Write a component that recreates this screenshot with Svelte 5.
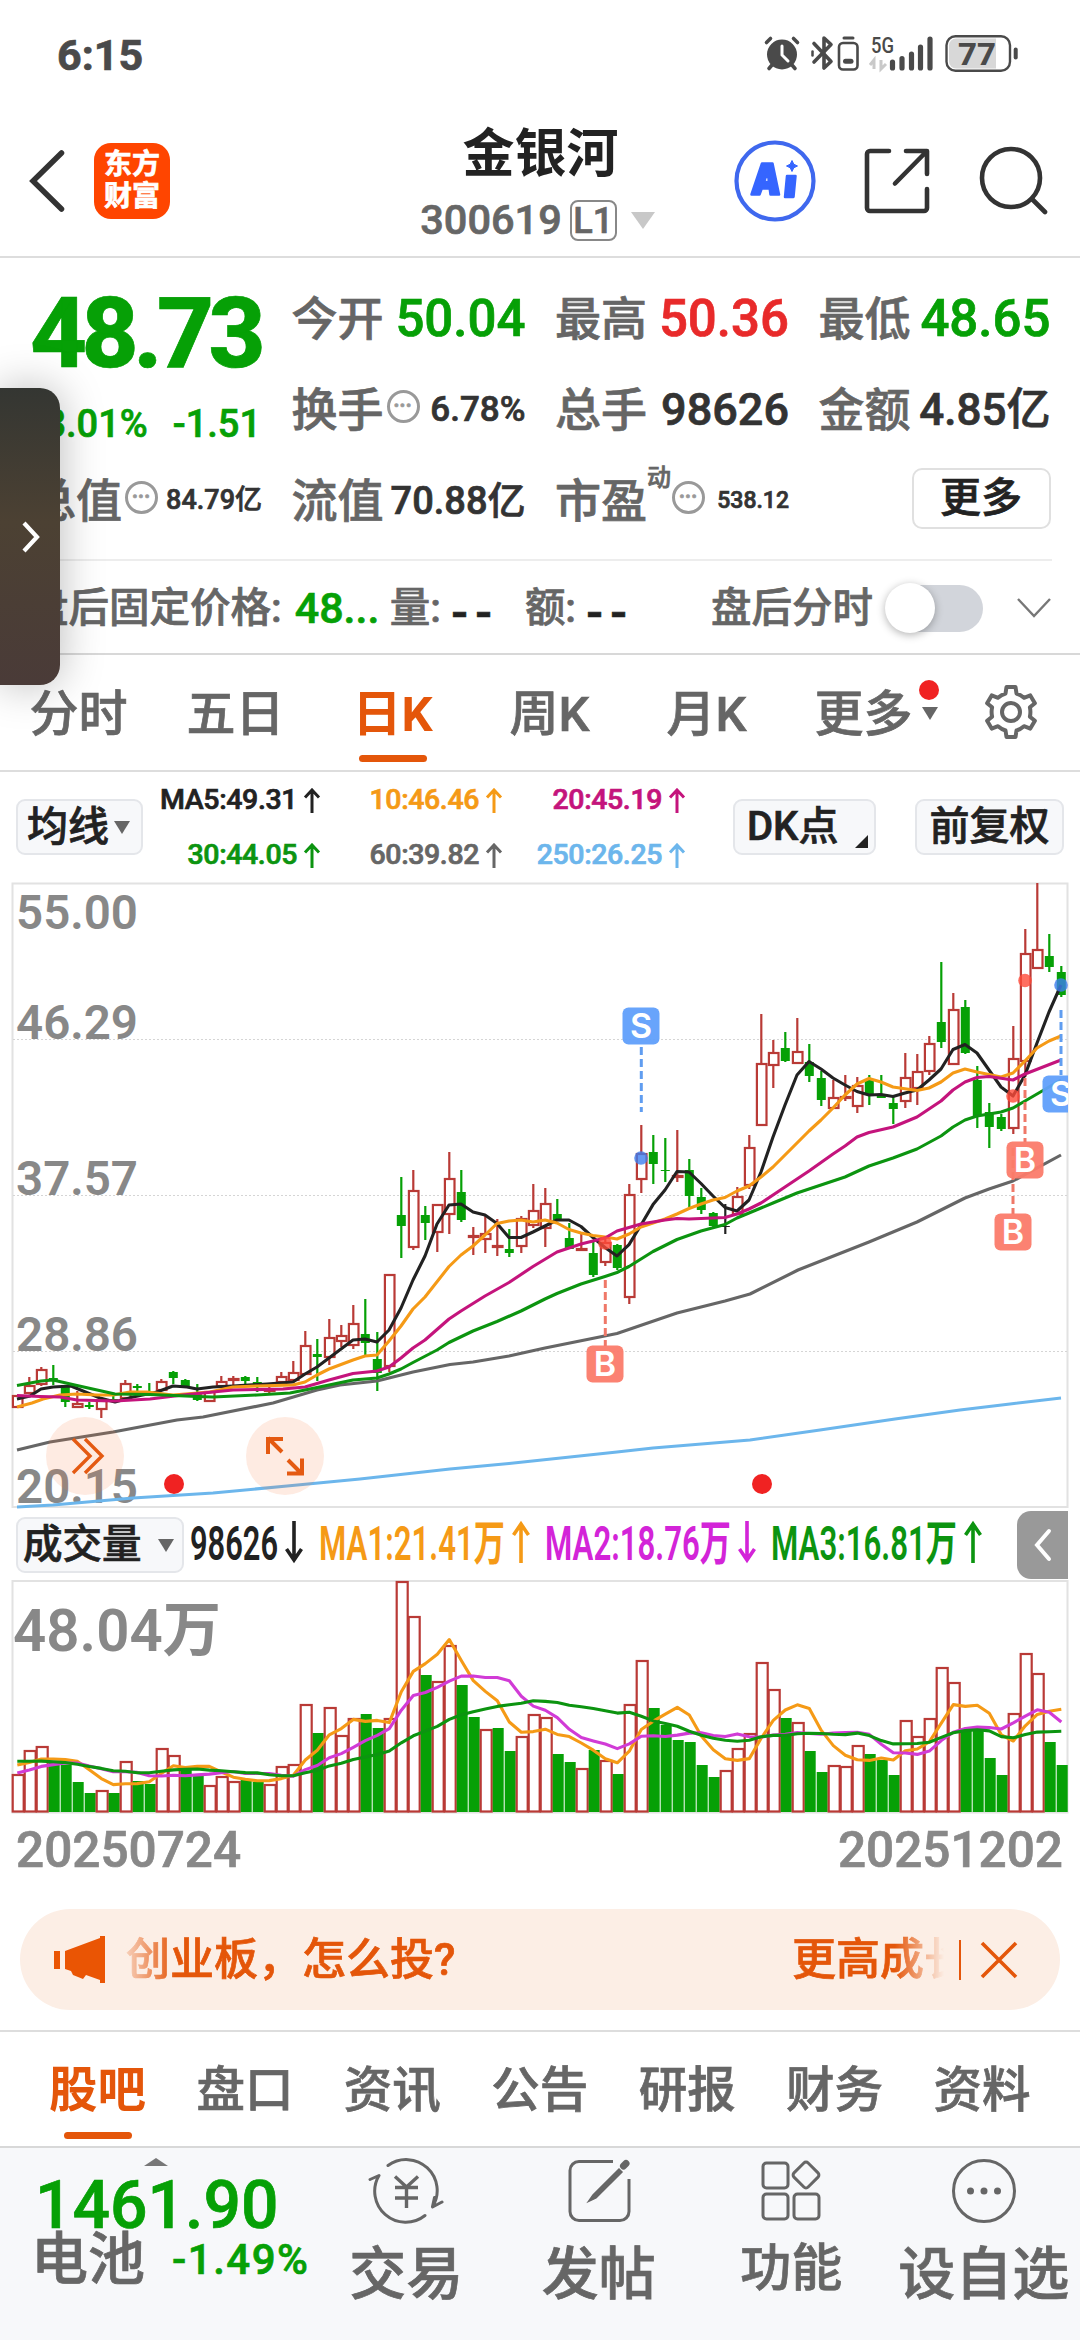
<script>
  const quotes = [
    { label: '今开', value: '50.04', tone: 'down', size: 51 },
    { label: '最高', value: '50.36', tone: 'up', size: 51 },
    { label: '最低', value: '48.65', tone: 'down', size: 51 },
    { label: '换手', value: '6.78%', size: 35, tip: true },
    { label: '总手', value: '98626', size: 45 },
    { label: '金额', value: '4.85亿', size: 44 },
    { label: '流值', value: '70.88亿', size: 38 },
    { label: '市盈', value: '538.12', size: 23, tip: true, sup: '动' },
  ];

  const periods = ['分时', '五日', '日K', '周K', '月K'];

  const averages = [
    { text: 'MA5:49.31', color: '#222222' },
    { text: '10:46.46', color: '#f59a16' },
    { text: '20:45.19', color: '#c4147c' },
    { text: '30:44.05', color: '#0c9410' },
    { text: '60:39.82', color: '#666666' },
    { text: '250:26.25', color: '#6cb6ec' },
  ];

  const sections = ['股吧', '盘口', '资讯', '公告', '研报', '财务', '资料'];

  // kind, high, body top, body bottom, low
  const candles = [
    ['r', 525, 525, 538, 538], ['r', 507, 515, 524, 524], ['r', 497, 499, 515, 516], ['g', 495, 508, 510, 515],
    ['g', 516, 517, 532, 537], ['r', 521, 533, 538, 538], ['g', 532, 535, 537, 539], ['r', 529, 530, 540, 548],
    ['g', 526, 529, 530, 532], ['r', 510, 513, 529, 530], ['g', 514, 516, 518, 522], ['g', 513, 522, 523, 525],
    ['r', 509, 511, 521, 521], ['g', 501, 502, 508, 514], ['g', 509, 510, 517, 517], ['g', 514, 522, 530, 531],
    ['r', 521, 521, 532, 532], ['r', 506, 511, 517, 518], ['r', 506, 508, 510, 515], ['g', 506, 507, 511, 515],
    ['g', 507, 512, 514, 522], ['r', 517, 519, 521, 523], ['r', 502, 506, 513, 515], ['r', 491, 502, 511, 512],
    ['r', 461, 475, 505, 505], ['g', 469, 484, 487, 511], ['r', 449, 467, 488, 495], ['r', 455, 465, 472, 477],
    ['r', 435, 453, 476, 479], ['g', 429, 464, 473, 485], ['g', 462, 489, 503, 521], ['r', 404, 404, 497, 502],
    ['g', 307, 345, 356, 388], ['r', 300, 320, 378, 380], ['g', 336, 345, 353, 370], ['r', 334, 334, 363, 382],
    ['r', 282, 308, 345, 364], ['g', 300, 322, 350, 352], ['r', 357, 365, 368, 385], ['r', 346, 363, 370, 383],
    ['r', 349, 375, 376, 386], ['g', 359, 379, 383, 387], ['r', 346, 348, 377, 383], ['r', 314, 340, 356, 358],
    ['r', 318, 333, 359, 377], ['g', 329, 344, 350, 351], ['g', 353, 368, 379, 379], ['r', 362, 378, 380, 380],
    ['g', 372, 383, 405, 407], ['r', 366, 372, 393, 396], ['g', 374, 375, 398, 400], ['r', 314, 324, 428, 434],
    ['r', 255, 283, 310, 323], ['g', 265, 282, 294, 314], ['g', 268, 300, 301, 312], ['r', 260, 305, 308, 312],
    ['g', 289, 300, 326, 337], ['g', 318, 327, 340, 344], ['g', 342, 343, 356, 358], ['k', 334, 356, 357, 364],
    ['r', 317, 326, 345, 345], ['r', 265, 277, 316, 319], ['r', 144, 193, 256, 256], ['r', 170, 182, 196, 218],
    ['g', 162, 178, 191, 192], ['r', 148, 181, 194, 194], ['g', 174, 192, 206, 212], ['g', 201, 208, 230, 236],
    ['r', 210, 227, 239, 239], ['r', 205, 226, 228, 231], ['r', 207, 215, 237, 243], ['g', 205, 209, 225, 235],
    ['g', 205, 225, 228, 228], ['g', 227, 233, 239, 254], ['r', 183, 207, 232, 238], ['r', 184, 201, 219, 235],
    ['r', 166, 173, 202, 205], ['g', 92, 152, 172, 178], ['r', 123, 139, 195, 195], ['g', 130, 137, 183, 184],
    ['g', 196, 210, 246, 258], ['g', 233, 242, 257, 278], ['g', 244, 247, 259, 261], ['r', 156, 188, 259, 264],
    ['r', 59, 83, 192, 207], ['r', 13, 79, 99, 99], ['g', 64, 86, 97, 102], ['g', 96, 102, 125, 127],
  ];

  const kLines = [
    { color: '#6cb6ec', points: '17,637 53,635 133,628 213,623 287,616 360,609 450,599 509,593.5 617,582 653,578 750,570 820,560 895,549 960,540 1010,534 1061,528' },
    { color: '#666666', points: '17,580 50,572 113,562 177,550 203,547 273,533 317,520 340,515 377,511 413,502 450,494.5 473,492 509,486 545,478 617,463.5 677,443 701,437 725,431 750,424 798,400 869,372 893,362 917,352 965,328 989,319 1013,311 1061,285' },
    { color: '#222222', points: '17,529 30,526 41,519 53,517 71,516 83,521 100,528 115,532 133,527 157,522 173,516 187,517 197,519 213,517 233,516 267,514 293,512 305,504 317,497 329,488 341,479 353,470 365,469 377,472 389,460 401,438 413,410 425,386 437,354 449,335 461,334 473,342 485,345 497,353.5 509,367.5 521,367.5 533,362 545,356 557,350 569,350 581,356.5 593,367.5 605,377.5 617,386 629,374.6 641,355 653,334.6 665,320 677,301.5 689,302 701,313.5 713,326 725,337.5 737,341 749,330 761,302 773,267 785,235 797,205 809,191.5 821,199 833,208 845,215 857,221.5 869,225 881,224.5 893,226.5 905,223 917,220 929,210 941,199 953,179.5 965,174.5 977,183 989,200 1001,217 1013,226 1025,205 1037,173 1049,142 1061,115' },
    { color: '#f59a16', points: '17,537 32,533 43,529 60,525 77,524 97,525 113,525 130,522 147,522 173,525 210,522 233,517 257,516 293,515 305,512 317,505 329,499 353,490 365,486 377,485 389,471 401,456 413,439 425,427 449,396.5 461,385 473,376 485,365 497,353.5 509,351 521,350 533,352 545,350 557,353 569,359.5 581,363 593,365.5 605,367 617,369 629,364 641,357 653,353 665,349 677,344 689,338.5 701,334 713,330 725,327.5 737,321 749,316 761,307 773,297 785,285 797,273 809,261 821,250 833,238 845,225 857,214 869,208.5 881,212 893,217 917,220.5 929,218 941,212 953,203 965,199 977,202 1001,207 1013,203 1025,191 1037,178 1049,171 1061,166' },
    { color: '#c4147c', points: '17,525.5 40,526.5 60,527 77,530 115,531 150,529 183,525 233,520 283,519 305,517 329,510 353,503.5 377,501 389,497 401,488 413,478 425,470 449,449 461,441 485,426 509,412.5 533,396.5 557,382 581,374 605,368 617,361 641,354 665,350 677,348.5 689,349 725,347.5 737,344 749,339 761,333 785,317 809,301 833,284 845,276 857,267 869,262.5 893,257 917,247 941,231 953,220 965,212 977,207.5 989,206.5 1013,210 1025,204 1061,190' },
    { color: '#0c9410', points: '17,515.5 41,511 53,510 77,515.5 115,524 150,524.5 197,526.5 213,527 257,525 290,523 305,520 329,515 353,510 377,508 389,504 401,499 413,492.5 437,480 449,472.5 473,461 497,451.5 521,441 545,429 557,423.5 581,414 605,406.5 617,402.5 629,396.5 653,381.5 677,369.5 701,361 725,354.5 737,348 749,343 773,333 797,323 821,315 845,307 869,296 893,288 917,279 941,266 953,257 965,250 977,246 1001,242 1013,238 1025,231 1061,210' },
  ];

  const priceLabels = [
    ['55.00', 59], ['46.29', 169], ['37.57', 325], ['28.86', 481], ['20.15', 633],
  ];

  const volumes = [
    38, 62, 66, 49, 47, 30, 19, 22, 19, 51, 31, 28, 64, 57, 42, 38, 27, 36, 31, 32, 30, 28, 46, 48, 108, 79, 105, 77, 94,
    98, 84, 94, 231, 196, 137, 131, 167, 127, 95, 83, 84, 61, 76, 98, 95, 58, 50, 44, 62, 52, 38, 108, 152, 104, 87, 72,
    70, 47, 35, 42, 64, 79, 150, 123, 94, 90, 61, 40, 47, 46, 67, 58, 52, 37, 92, 76, 94, 145, 130, 83, 82, 54, 37, 99,
    159, 139, 70, 47,
  ];
  // sessions before the first visible bar, needed by the averages
  const earlier = [63, 63, 63, 63, 63, 63, 63, 63, 62, 61, 31, 31, 31, 31, 31, 49, 49, 49, 50];
  const volumeKinds = 'rrrggggrgrggrrggrrrggrrrrgrrrggrrrgrrggrggrrrggrgrgrrggggggrrrrrgrggrrrgggrrrrrggggrrrgg';

  const average = (span) => {
    const all = [...earlier, ...volumes];
    return volumes
      .map((_, i) => {
        const end = i + earlier.length + 1;
        const sum = all.slice(end - span, end).reduce((a, b) => a + b, 0);
        return `${cx(i)},${(231 - sum / span).toFixed(1)}`;
      })
      .join(' ');
  };

  const cx = (i) => 17.3 + i * 12;
  const paint = { r: '#b93a36', g: '#06a006', k: '#222222' };
</script>

<svelte:head>
  <title>金银河 300619</title>
</svelte:head>

<main class="screen">
  <header class="status">
    <span class="clock">6:15</span>
    <svg class="status-icons" width="260" height="40" viewBox="42 14 260 40">
      <g fill="none" stroke="#4a4a4a" stroke-width="3.6" stroke-linecap="round">
        <circle cx="62" cy="34.500" r="15" fill="#4a4a4a" stroke="none" />
        <path d="M62 26v9l6 6" stroke="#fff" stroke-width="3" />
        <path d="M46.500 22.500l4-4M77.500 22.500l-4-4M52 45l-3 3.500M72 45l3 3.500" />
        <path d="M94 23.500l17 18-7 6.500V18l7 6.500-17 17.500" stroke-linejoin="round" />
        <path d="M92.500 31.500v4" stroke-width="2.500" />
        <rect x="119" y="23" width="18.500" height="26.500" rx="4" stroke-width="2.600" />
        <path d="M124 18h9" stroke-width="3" />
        <path d="M125.500 41.200h5.500" stroke-width="5" />
        <path d="M172.500 42v6M182 38.500v9.500M191.500 34v14M200.500 27v21M210 19v29" stroke-width="5.200" />
        <rect x="226.500" y="16.200" width="63.500" height="34.500" rx="9" stroke-width="2.400" />
        <path d="M295.700 29.500v8" stroke-width="4" />
      </g>
      <path d="M236 18.500h40v30h-40a7 7 0 0 1-7-7v-16a7 7 0 0 1 7-7z" fill="#d8d8d8" />
      <path d="M154 49V40l-4 5M161 40v9l5-5" fill="none" stroke="#c9c9c9" stroke-width="3" />
      <text x="151" y="33" font-size="22" font-weight="500" textLength="23" lengthAdjust="spacingAndGlyphs" fill="#4a4a4a">5G</text>
      <text x="238" y="45" font-size="31" font-weight="800" textLength="38" lengthAdjust="spacingAndGlyphs" fill="#4a4a4a">77</text>
    </svg>
  </header>

  <nav class="title-bar">
    <svg class="back" width="40" height="64" viewBox="0 0 40 64">
      <path d="M33.500 4L5 32l28.500 28" fill="none" stroke="#333" stroke-width="5.500" stroke-linecap="round" />
    </svg>
    <div class="logo"><span>东方</span><span>财富</span></div>
    <div class="stock">
      <h1>金银河</h1>
      <div class="code">
        <span>300619</span>
        <span class="level">L1</span>
        <i class="tri light"></i>
      </div>
    </div>
    <div class="tools">
      <svg width="82" height="82" viewBox="0 0 82 82">
        <circle cx="41" cy="41" r="38.500" fill="none" stroke="#3f68ee" stroke-width="4.200" />
        <g fill="#3565ff" stroke="#3565ff" stroke-width="2.500" stroke-linejoin="round">
          <path fill-rule="evenodd" d="M17.500 54.500L28 23.500h10.500L45 54.500h-8.500l-.8-6h-8l-2.200 6zM30 42h5l-1.400-10z" />
          <path d="M53 36h8.500l-2 21H51z" />
          <path d="M58 20.500l1.800 3.700 3.700 1.800-3.700 1.800L58 31.500l-1.800-3.700-3.700-1.800 3.700-1.800z" stroke-width="1" />
        </g>
      </svg>
      <svg width="66" height="66" viewBox="0 0 66 66" fill="none" stroke="#333" stroke-width="4.600" stroke-linecap="round" stroke-linejoin="round">
        <path d="M25 3H6a3 3 0 0 0-3 3v54a3 3 0 0 0 3 3h54a3 3 0 0 0 3-3V41M42 3h21v23M62 4L31 35.500" />
      </svg>
      <svg width="70" height="70" viewBox="0 0 70 70" fill="none" stroke="#333" stroke-width="4.600" stroke-linecap="round">
        <circle cx="33" cy="32" r="29" />
        <path d="M54 53l13 13" />
      </svg>
    </div>
  </nav>

  <section class="quote">
    <div class="quote-grid">
      <div class="last">48.73</div>
      {#each quotes.slice(0, 3) as q}
        <div class="cell">
          <span class="label">{q.label}</span>
          <b class={q.tone} style="font-size: {q.size}px">{q.value}</b>
        </div>
      {/each}
      <div class="change"><span>-3.01%</span><span>-1.51</span></div>
      {#each quotes.slice(3, 6) as q}
        <div class="cell">
          <span class="label">{q.label}</span>
          {#if q.tip}<i class="tip">•••</i>{/if}
          <b style="font-size: {q.size}px">{q.value}</b>
        </div>
      {/each}
      <div class="cell">
        <span class="label">总值</span><i class="tip">•••</i>
        <b class="worth">84.79亿</b>
      </div>
      {#each quotes.slice(6) as q}
        <div class="cell">
          <span class="label">{q.label}{#if q.sup}<sup>{q.sup}</sup>{/if}</span>
          {#if q.tip}<i class="tip" class:after-sup={q.sup}>•••</i>{/if}
          <b style="font-size: {q.size}px">{q.value}</b>
        </div>
      {/each}
      <div class="cell end"><button class="more">更多</button></div>
    </div>

    <div class="after-hours">
      <span>盘后固定价格:</span>
      <b class="down fixed">48...</b>
      <span>量:</span>
      <b class="dash">--</b>
      <span>额:</span>
      <b class="dash">--</b>
      <span class="switch-label">盘后分时</span>
      <div class="switch"><i></i></div>
      <svg width="36" height="24" viewBox="0 0 36 24"><path d="M2 3l16 17L34 3" fill="none" stroke="#777" stroke-width="2.400" /></svg>
    </div>

    <aside class="drawer">
      <svg width="24" height="36" viewBox="0 0 24 36"><path d="M4 4l13 14L4 32" fill="none" stroke="#fff" stroke-width="4.200" /></svg>
    </aside>
  </section>

  <nav class="periods">
    {#each periods as p}
      <div class="period"><span class:active={p === '日K'}>{p}</span></div>
    {/each}
    <div class="period"><span class="dots">更多<i class="badge"></i><i class="tri dark"></i></span></div>
    <svg width="60" height="60" viewBox="0 0 60 60" fill="none" stroke="#666" stroke-width="4" stroke-linejoin="round">
      <path d="M24.500 9.500L25.500 3h9l1 6.500a22 22 0 0 1 7.500 4.300l6.300-2.400 4.600 7.800-5 4.100a22 22 0 0 1 0 9.400l5 4.100-4.600 7.800-6.300-2.400a22 22 0 0 1-7.500 4.300l-1 6.500h-9l-1-6.500a22 22 0 0 1-7.500-4.300l-6.300 2.400-4.600-7.800 5-4.100a22 22 0 0 1 0-9.400l-5-4.100 4.600-7.800 6.300 2.400a22 22 0 0 1 7.500-4.300z" />
      <circle cx="30" cy="28" r="9" />
    </svg>
  </nav>

  <section class="ma-bar">
    <button class="chip ma">均线<i class="tri dark"></i></button>
    <div class="ma-grid">
      {#each averages as a}
        <span style="color: {a.color}">
          {a.text}
          <svg width="18" height="25" viewBox="0 0 18 25"><path d="M9 25V3M2 9.500L9 2l7 7.500" fill="none" stroke="currentColor" stroke-width="3" /></svg>
        </span>
      {/each}
    </div>
    <button class="chip dk">DK点<i class="corner"></i></button>
    <button class="chip adj">前复权</button>
  </section>

  <svg class="k-chart" width="1080" height="628" viewBox="0 12 1080 628">
    <g fill="none" stroke="#e2e2e2" stroke-width="2">
      <path d="M12.500 13.500H1067.500V637H12.500z" />
      <path d="M13 169.500H1067M13 325.500H1067M13 481.500H1067" stroke="#d5d5d5" stroke-width="1.200" stroke-dasharray="2 2" />
    </g>
    <g font-size="48" font-weight="600" fill="#888">
      {#each priceLabels as [text, y]}
        <text x="16" {y} textLength="122" lengthAdjust="spacingAndGlyphs">{text}</text>
      {/each}
    </g>
    {#each candles as [kind, high, top, bottom, low], i}
      <g stroke={paint[kind]} stroke-width="2.200">
        {#if kind === 'r'}
          <path d="M{cx(i)} {high}V{top}M{cx(i)} {bottom}V{low}" />
          <rect x={cx(i) - 4.4} y={top + 1} width="9.600" height={Math.max(bottom - top - 2, 1)} fill="none" />
        {:else}
          <path d="M{cx(i)} {high}V{low}" />
          <rect x={cx(i) - 4.5} y={top} width="9" height={Math.max(bottom - top, 1)} fill={paint[kind]} stroke="none" />
        {/if}
      </g>
    {/each}
    {#each kLines as line}
      <polyline points={line.points} fill="none" stroke={line.color} stroke-width="3.100" stroke-linejoin="round" />
    {/each}

    <g stroke-width="3" stroke-dasharray="8 4">
      <path d="M641.300 177v65M1061 140v65" stroke="#609df0" />
      <path d="M605.300 410v66M1013 278v66M1025 208v64" stroke="#ef7868" />
    </g>
    <g fill="#3d7eef" fill-opacity="0.800">
      <circle cx="641" cy="288" r="6.800" />
      <circle cx="1061" cy="115" r="6.800" />
    </g>
    <g fill="#ff4b3a" fill-opacity="0.800">
      <circle cx="605" cy="373" r="6.800" />
      <circle cx="1025" cy="110.500" r="6.800" />
      <circle cx="1013" cy="226" r="6.800" />
    </g>
    <clipPath id="plot"><rect x="12" y="12" width="1056" height="628" /></clipPath>
    <g clip-path="url(#plot)" font-size="34" font-weight="600" text-anchor="middle" font-family="Inter, sans-serif">
      {#each [['S', 641, 156], ['B', 605, 494], ['B', 1025, 290], ['B', 1013, 362], ['S', 1061, 224]] as [mark, x, y]}
        <rect x={x - 18.5} y={y - 18.5} width="37" height="37" rx="6" fill={mark === 'S' ? '#609ffb' : '#fb7b6a'} fill-opacity="0.950" />
        <text {x} y={y + 12} fill="#fff">{mark}</text>
      {/each}
    </g>

    <g fill="#f97a3c" fill-opacity="0.150">
      <circle cx="85" cy="586" r="39" />
      <circle cx="285" cy="586" r="39" />
    </g>
    <g fill="none" stroke="#e45a12" stroke-width="3.400">
      <path d="M73 569l17 17-17 17M85 569l17 17-17 17" />
      <path d="M282 582l-14-14M283 569h-15v15M288 590l14 14M287 603.500h15v-15" stroke-width="4" />
    </g>
    <circle cx="174" cy="614" r="10" fill="#f02222" />
    <circle cx="762" cy="614" r="10" fill="#f02222" />
  </svg>

  <section class="volume-bar">
    <button class="chip vol">成交量<i class="tri dark"></i></button>
    <svg width="800" height="72" viewBox="190 0 800 72" font-size="48" font-weight="600">
      {#each [['98626', 190, 88, '#222222', 1], ['MA1:21.41万', 319, 186, '#f59a16', 0], ['MA2:18.76万', 545, 186, '#d324d8', 1], ['MA3:16.81万', 771, 186, '#0c9410', 0]] as [text, x, length, color, falling]}
        <text {x} y="51" textLength={length} lengthAdjust="spacingAndGlyphs" fill={color}>{text}</text>
        <path
          transform="translate({x + length + 16} 33) scale(1 {falling ? -1 : 1})"
          d="M0 21V-17M-7.500 -7L0 -18l7.500 11"
          fill="none"
          stroke={color}
          stroke-width="3.600"
        />
      {/each}
    </svg>
    <button class="fold" aria-label="收起">
      <svg width="20" height="34" viewBox="0 0 20 34"><path d="M16 3L4 17l12 14" fill="none" stroke="#fff" stroke-width="4" stroke-linecap="round" /></svg>
    </button>
  </section>

  <svg class="v-chart" width="1080" height="234" viewBox="0 -1 1080 234">
    <path d="M12.500 0H1067.500V231.500H12.500z" fill="none" stroke="#e2e2e2" stroke-width="2" />
    <text x="13" y="70" font-size="59" font-weight="600" textLength="208" lengthAdjust="spacingAndGlyphs" fill="#888">48.04万</text>
    {#each volumes as v, i}
      {#if volumeKinds[i] === 'r'}
        <rect x={cx(i) - 4.6} y={232 - v} width="11" height={v - 1.500} fill="#fff" stroke={paint.r} stroke-width="2.200" />
      {:else}
        <rect x={cx(i) - 4.6} y={231 - v} width="11" height={v} fill={paint.g} />
      {/if}
    {/each}
    <g fill="none" stroke-width="3.100" stroke-linejoin="round">
      <polyline points={average(5)} stroke="#f59a16" />
      <polyline points={average(10)} stroke="#d13bd6" />
      <polyline points={average(20)} stroke="#0c9410" />
    </g>
  </svg>

  <div class="dates"><span>20250724</span><span>20251202</span></div>

  <section class="banner">
    <svg width="54" height="48" viewBox="0 0 54 48" fill="#ea5504">
      <path d="M0 15h6v18H0zM11 15L46 2v-2h5v47h-5v-3l-14-5-3 4-10-4-2-4-6-2z" />
    </svg>
    <div class="ticker"><span>创业板，怎么投?</span><span>更高成长</span></div>
    <i class="bar"></i>
    <svg width="40" height="40" viewBox="0 0 40 40"><path d="M3 3l34 34M37 3L3 37" stroke="#e4560a" stroke-width="3.600" /></svg>
  </section>

  <nav class="sections">
    {#each sections as s, i}
      <span class:active={i === 0}>{s}</span>
    {/each}
  </nav>

  <footer class="bottom">
    <div class="index">
      <i class="tri up"></i>
      <div class="index-value">1461.90</div>
      <div class="index-row"><span>电池</span><b>-1.49%</b></div>
    </div>
    <div class="action">
      <svg width="76" height="68" viewBox="0 0 76 68" fill="none" stroke="#666" stroke-width="3" stroke-linecap="round" stroke-linejoin="round">
        <path d="M20 9.500A31 31 0 0 1 64.500 51l9.500-5M64.500 50.500l2-9M57 59.500A31 31 0 0 1 11 19.500l-9 4" />
        <path d="M27 20.500L38.500 31 50 20.500M38.500 31v21M27 31.500h23M27 42h23" stroke-width="3.400" stroke-linecap="butt" />
      </svg>
      <span>交易</span>
    </div>
    <div class="action">
      <svg width="64" height="68" viewBox="0 0 64 68" fill="none" stroke="#666" stroke-width="3">
        <path d="M46 5.500H12a9 9 0 0 0-9 9v41a9 9 0 0 0 9 9h41a9 9 0 0 0 9-9V23" />
        <path d="M52 13L26 39l-4.500 6.500L29 42 55 16z" fill="#666" stroke-width="1.500" />
        <path d="M56.500 10l2.500-2.500" stroke-width="7" stroke-linecap="round" />
      </svg>
      <span>发帖</span>
    </div>
    <div class="action">
      <svg width="62" height="68" viewBox="0 0 62 68" fill="none" stroke="#666" stroke-width="3">
        <rect x="3" y="7" width="25" height="25" rx="3.500" />
        <rect x="3" y="38" width="25" height="25" rx="3.500" />
        <rect x="34" y="38" width="25" height="25" rx="3.500" />
        <rect x="36" y="9" width="20" height="20" rx="3" transform="rotate(45 46 19)" />
      </svg>
      <span class="small">功能</span>
    </div>
    <div class="action">
      <svg width="66" height="68" viewBox="0 0 66 68">
        <circle cx="33" cy="35" r="30.500" fill="none" stroke="#666" stroke-width="3" />
        <g fill="#666"><circle cx="19.500" cy="35" r="3.500" /><circle cx="33" cy="35" r="3.500" /><circle cx="46.500" cy="35" r="3.500" /></g>
      </svg>
      <span>设自选</span>
    </div>
  </footer>
</main>

<style>
  :global(body) {
    background: #ffffff;
  }

  .screen {
    width: 1080px;
    height: 2340px;
    overflow: hidden;
    background: #ffffff;
    color: #666666;
    font-family: Roboto, 'Noto Sans CJK SC', sans-serif;
    font-weight: 500;
    line-height: 1;
    -webkit-text-stroke: 0.7px;
    display: flex;
    flex-direction: column;
  }

  .screen > * {
    flex: none;
    box-sizing: border-box;
  }

  svg {
    display: block;
    flex: none;
  }

  span, b {
    white-space: nowrap;
  }

  button {
    font: inherit;
    padding: 0;
    box-sizing: border-box;
    -webkit-text-stroke: 0.7px;
  }

  .tri {
    width: 0;
    height: 0;
    border: 8px solid transparent;
    border-bottom: 0;
    border-top: 13px solid #666666;
  }

  .tri.light {
    border-width: 17px 12px 0;
    border-top-color: #c8c8c8;
    margin-left: 14px;
  }

  .status {
    height: 108px;
    display: flex;
    align-items: center;
    justify-content: space-between;
    padding: 0 58px 0 57px;
  }

  .clock {
    font-size: 43px;
    font-weight: 700;
    color: #4a4a4a;
    padding-top: 3px;
  }

  .title-bar {
    height: 150px;
    border-bottom: 2px solid #dddddd;
    display: flex;
    align-items: center;
    padding: 0 32px 0 28px;
  }

  .back {
    margin-top: -2px;
  }

  .logo {
    width: 76px;
    height: 76px;
    box-sizing: border-box;
    margin: -3px 0 0 26px;
    border-radius: 17px;
    background: #ff4500;
    color: #ffffff;
    font-size: 28px;
    font-weight: 700;
    display: flex;
    flex-direction: column;
    align-items: center;
    justify-content: center;
    gap: 4px;
  }

  .stock {
    flex: 1;
    padding-left: 195px;
    display: flex;
    flex-direction: column;
    align-items: center;
  }

  h1 {
    margin: 5px 0 0;
    font-size: 52px;
    font-weight: 700;
    line-height: 60px;
    color: #222222;
    padding-right: 18px;
    -webkit-text-stroke: 0;
  }

  .code {
    display: flex;
    align-items: center;
    height: 48px;
    margin: 11px 24px 0 0;
    font-size: 41.5px;
  }

  .level {
    box-sizing: border-box;
    width: 47px;
    height: 41px;
    margin-left: 8px;
    border: 2px solid #888888;
    border-radius: 8px;
    font-size: 36px;
    line-height: 38px;
    text-align: center;
  }

  .tools {
    display: flex;
    align-items: center;
    gap: 48px;
    margin-top: -2px;
  }

  .quote {
    position: relative;
    height: 397px;
    border-bottom: 2px solid #d8d8d8;
  }

  .quote-grid {
    box-sizing: border-box;
    height: 301px;
    padding: 15px 28px 12px 30px;
    display: grid;
    grid-template-columns: 232px 234px 234px 232px;
    grid-template-rows: 91px 91px 91px;
    column-gap: 29.5px;
  }

  .last {
    font-size: 99px;
    font-weight: 800;
    letter-spacing: -5.5px;
    line-height: 120px;
    color: #06a006;
  }

  .cell {
    display: flex;
    align-items: center;
  }

  .cell b {
    margin-left: auto;
    font-weight: 500;
    color: #333333;
  }

  .label {
    position: relative;
    font-size: 46px;
  }

  sup {
    position: absolute;
    left: 92px;
    top: -12px;
    font-size: 24px;
  }

  .cell .down, .down {
    color: #06a006;
  }

  .cell .up {
    color: #e82a2a;
  }

  .cell .worth {
    font-size: 27px;
  }

  .tip {
    box-sizing: border-box;
    width: 33px;
    height: 33px;
    margin: -6px 0 0 3px;
    border: 3px solid #999999;
    border-radius: 50%;
    font-size: 15px;
    line-height: 27px;
    letter-spacing: 1px;
    font-style: normal;
    color: #999999;
    display: flex;
    justify-content: center;
    align-items: center;
  }

  .tip.after-sup {
    margin-left: 25px;
  }

  .change {
    display: flex;
    align-items: center;
    justify-content: flex-end;
    gap: 25px;
    padding: 28px 1px 0 0;
    font-size: 38px;
    color: #06a006;
  }

  .end {
    justify-content: flex-end;
  }

  .more {
    width: 139px;
    height: 61px;
    margin-top: -4px;
    border: 2px solid #e0e0e0;
    border-radius: 10px;
    background: #ffffff;
    color: #222222;
    font-size: 41px;
  }

  .after-hours {
    height: 94px;
    margin: 0 28px;
    border-top: 2px solid #ededed;
    display: flex;
    align-items: center;
    font-size: 40.5px;
  }

  .after-hours b {
    font-weight: 500;
    color: #222222;
  }

  .after-hours .fixed {
    width: 95px;
    margin-left: 13px;
    font-size: 43px;
    color: #06a006;
  }

  .after-hours .dash {
    width: 74px;
    margin-left: 10px;
    font-family: 'Noto Sans CJK SC', sans-serif;
    font-size: 46px;
    font-weight: 700;
    letter-spacing: 7px;
    line-height: 40px;
  }

  .switch-label {
    margin-left: auto;
  }

  .switch {
    width: 94px;
    height: 47px;
    margin: 0 33px 0 16px;
    border-radius: 24px;
    background: #d2d5db;
  }

  .switch i {
    display: block;
    width: 50px;
    height: 50px;
    margin: -2px 0 0 -4px;
    border-radius: 50%;
    background: #ffffff;
    box-shadow: 0 2px 8px rgba(0, 0, 0, 0.3);
  }

  .drawer {
    position: absolute;
    left: 0;
    top: 130px;
    width: 60px;
    height: 297px;
    box-sizing: border-box;
    padding-left: 20px;
    border-radius: 0 20px 20px 0;
    background: linear-gradient(#343632, #4c4133 45%, #4a3b38);
    box-shadow: 0 0 44px rgba(0, 0, 0, 0.28);
    display: flex;
    align-items: center;
    z-index: 2;
  }

  .periods {
    height: 117px;
    border-bottom: 2px solid #dddddd;
    display: flex;
    align-items: center;
    padding: 3px 39px 0 0;
    font-size: 49px;
  }

  .period {
    width: 157px;
    display: flex;
    justify-content: center;
  }

  .period span {
    position: relative;
  }

  .periods svg {
    margin-left: auto;
  }

  .active {
    position: relative;
    color: #e4560a;
    font-weight: 700;
    -webkit-text-stroke: 0;
  }

  .active::after {
    content: '';
    position: absolute;
    left: 50%;
    bottom: -23px;
    width: 68px;
    height: 7px;
    margin-left: -34px;
    border-radius: 4px;
    background: #e4560a;
  }

  .dots .badge {
    position: absolute;
    left: 105px;
    top: -10px;
    width: 20px;
    height: 20px;
    border-radius: 50%;
    background: #f02222;
  }

  .dots .tri {
    position: absolute;
    left: 108px;
    top: 17px;
  }

  .ma-bar {
    height: 110px;
    display: flex;
    align-items: center;
    padding: 0 16px;
  }

  .chip {
    height: 56px;
    border: 2px solid #e4e6ea;
    border-radius: 9px;
    background: #f7f8fa;
    color: #222222;
    display: flex;
    align-items: center;
    font-size: 41px;
  }

  .chip.ma {
    width: 127px;
    padding-left: 9px;
    gap: 5px;
  }

  .ma-grid {
    width: 543px;
    padding-top: 2px;
    display: grid;
    grid-template-columns: 178px 182px 183px;
    grid-template-rows: 55px 55px;
    font-size: 28.500px;
    letter-spacing: -0.4px;
  }

  .ma-grid span {
    display: flex;
    align-items: center;
    justify-content: flex-end;
    gap: 6px;
  }

  .chip.dk {
    position: relative;
    width: 143px;
    margin-left: 47px;
    padding-left: 12px;
    font-size: 40px;
  }

  .corner {
    position: absolute;
    right: 6px;
    bottom: 5px;
    border-bottom: 13px solid #222222;
    border-left: 13px solid transparent;
  }

  .chip.adj {
    width: 149px;
    margin-left: auto;
    justify-content: center;
    font-size: 40px;
  }

  .volume-bar {
    height: 70px;
    display: flex;
    align-items: center;
    padding-left: 16px;
  }

  .chip.vol {
    width: 168px;
    margin-right: 6px;
    padding-left: 5px;
    gap: 16px;
    font-size: 39.500px;
  }

  .fold {
    width: 51px;
    height: 68px;
    margin-left: auto;
    margin-right: 12px;
    border: 0;
    border-radius: 14px 0 0 14px;
    background: #999999;
    display: flex;
    align-items: center;
    justify-content: center;
  }

  .dates {
    height: 95px;
    padding: 15px 17px 0 16px;
    display: flex;
    justify-content: space-between;
    font-size: 49.500px;
    line-height: 43px;
    color: #888888;
  }

  .banner {
    height: 101px;
    margin: 0 20px 20px;
    padding: 0 40px 0 34px;
    border-radius: 51px;
    background: #fceee5;
    display: flex;
    align-items: center;
    color: #e4560a;
  }

  .ticker {
    width: 818px;
    margin-left: 18px;
    overflow: hidden;
    display: flex;
    justify-content: space-between;
    font-size: 44px;
    line-height: 60px;
    -webkit-mask-image: linear-gradient(90deg, rgba(0, 0, 0, 0.2), #000 6%, #000 94%, transparent);
    mask-image: linear-gradient(90deg, rgba(0, 0, 0, 0.2), #000 6%, #000 94%, transparent);
  }

  .ticker span:last-child {
    margin-right: -24px;
  }

  .bar {
    width: 2px;
    height: 40px;
    margin: 0 18px 0 15px;
    background: #e4560a;
  }

  .sections {
    height: 118px;
    padding: 5px 0 0 49px;
    border-top: 2px solid #dddddd;
    border-bottom: 2px solid #d8d8d8;
    display: flex;
    align-items: center;
    gap: 50.4px;
    font-size: 48.500px;
  }

  .bottom {
    flex: 1;
    background: #f7f8fa;
    display: flex;
  }

  .index {
    flex: none;
    box-sizing: border-box;
    width: 310px;
    padding-left: 31px;
    color: #06a006;
  }

  .tri.up {
    display: block;
    margin: 10px 0 0 113px;
    border: 12px solid transparent;
    border-top: 0;
    border-bottom: 8px solid #777777;
  }

  .index-value {
    margin: 3px 0 0 4px;
    font-size: 66px;
    line-height: 74px;
  }

  .index-row {
    display: flex;
    align-items: center;
    gap: 27px;
    margin-top: -12px;
    font-size: 57px;
    color: #666666;
  }

  .index-row b {
    font-size: 42px;
    font-weight: 500;
    letter-spacing: 1.5px;
    color: #06a006;
  }

  .action {
    flex: none;
    width: 192.5px;
    padding-top: 8px;
    display: flex;
    flex-direction: column;
    align-items: center;
    font-size: 57px;
  }

  .action span {
    margin-top: 22px;
  }

  .action .small {
    margin-top: 19px;
    font-size: 51px;
  }
</style>
